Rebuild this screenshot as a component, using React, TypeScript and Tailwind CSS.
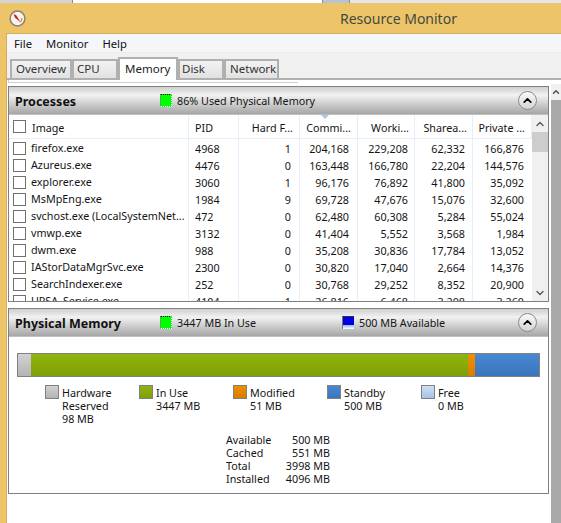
import type { ReactNode } from 'react';
import { ChevronUp, ChevronDown } from 'lucide-react';

const headers = [
  { label: 'Image', cls: 'w-[180px] pl-[23px]' },
  { label: 'PID', cls: 'w-[50px] pl-[6px]' },
  { label: 'Hard F...', cls: 'w-[61px] pr-[6px] text-right' },
  { label: 'Commi...', cls: 'w-[58px] pr-[6px] text-right' },
  { label: 'Worki...', cls: 'w-[57px] pr-[5px] text-right' },
  { label: 'Sharea...', cls: 'w-[58px] pr-[5px] text-right' },
  { label: 'Private ...', cls: 'w-[59px] pr-[6px] text-right' },
];

const processes = [
  ['firefox.exe', '4968', '1', '204,168', '229,208', '62,332', '166,876'],
  ['Azureus.exe', '4476', '0', '163,448', '166,780', '22,204', '144,576'],
  ['explorer.exe', '3060', '1', '96,176', '76,892', '41,800', '35,092'],
  ['MsMpEng.exe', '1984', '9', '69,728', '47,676', '15,076', '32,600'],
  ['svchost.exe (LocalSystemNet...', '472', '0', '62,480', '60,308', '5,284', '55,024'],
  ['vmwp.exe', '3132', '0', '41,404', '5,552', '3,568', '1,984'],
  ['dwm.exe', '988', '0', '35,208', '30,836', '17,784', '13,052'],
  ['IAStorDataMgrSvc.exe', '2300', '0', '30,820', '17,040', '2,664', '14,376'],
  ['SearchIndexer.exe', '252', '0', '30,768', '29,252', '8,352', '20,900'],
  ['UPSA_Service.exe', '4104', '1', '26,816', '6,468', '3,208', '3,260'],
];

const legend = [
  { name: 'Hardware', lines: ['Reserved', '98 MB'], fill: 'from-[#d2d2d2] to-[#b4b4b4]' },
  { name: 'In Use', lines: ['3447 MB'], fill: 'from-[#8fb50c] to-[#7f9f08]' },
  { name: 'Modified', lines: ['51 MB'], fill: 'from-[#f09000] to-[#d87c00]' },
  { name: 'Standby', lines: ['500 MB'], fill: 'from-[#4a88d4] to-[#3a74bc]' },
  { name: 'Free', lines: ['0 MB'], fill: 'from-[#cfdff5] to-[#a4c2ea]' },
];

const totals = [
  ['Available', '500 MB'],
  ['Cached', '551 MB'],
  ['Total', '3998 MB'],
  ['Installed', '4096 MB'],
];

const tabs = [
  { label: 'Overview', cls: 'w-[62px] pl-[4px]' },
  { label: 'CPU', cls: 'w-[46px] pl-[3px]' },
  { label: 'Memory', cls: 'w-[60px] pl-[5px]', active: true },
  { label: 'Disk', cls: 'w-[46px] pl-[2px]' },
  { label: 'Network', cls: 'w-[55px] pl-[4px]' },
];

function Check() {
  return <span className="block w-[13px] h-[13px] shrink-0 border border-[#707070] bg-white" />;
}

function GreenSwatch() {
  return (
    <span className="block w-[12px] h-[13px] shrink-0 border-t border-dotted border-t-black border-l border-l-[#777] border-r border-r-white border-b border-b-white bg-[#00ff00]" />
  );
}

function BlueSwatch() {
  return (
    <span className="flex flex-col w-[12px] h-[13px] shrink-0 border-l border-l-[#777] border-t border-t-[#333]">
      <span className="block h-[8px] bg-[#0000e6]" />
      <span className="block flex-1 bg-gradient-to-b from-[#8db8ee] to-white" />
    </span>
  );
}

function SectionHeader({ title, width, children }: { title: string; width: string; children: ReactNode }) {
  return (
    <div className="flex items-center h-[28px] shrink-0 border-b border-[#c0c0c0] bg-gradient-to-b from-[#cfcfcf] via-[#f2f2f2] via-30% to-[#a6a6a6]">
      <span className={`${width} shrink-0 pl-[6px] pt-[2px] text-[12.5px] font-bold text-[#111] whitespace-nowrap`}>{title}</span>
      {children}
      <span className="ml-auto mr-[11px] flex items-center justify-center w-[19px] h-[19px] rounded-full border border-[#8a8a8a] bg-gradient-to-b from-[#fafafa] to-[#d4d4d4]">
        <ChevronUp className="w-[13px] h-[13px] text-black" strokeWidth={3.2} />
      </span>
    </div>
  );
}

export default function App() {
  return (
    <div className="font-['Noto_Sans',sans-serif] w-[561px] h-[523px] overflow-hidden bg-white text-[10.75px] leading-[13px] text-[#141414] flex flex-col">
      {/* strip of the window behind */}
      <div className="h-[3px] shrink-0 flex bg-[#e6e6e6]">
        <div className="w-[73px] bg-[#d4d4d4] border-r border-[#888]" />
        <div className="w-[249px] bg-white" />
        <div className="w-[28px] bg-[#b9c4d2] border-x border-[#8a8a8a]" />
      </div>

      {/* title bar */}
      <div className="h-[30px] shrink-0 flex items-center bg-[#eec468] pl-[9px] pt-[1px]">
        <svg width="17" height="17" viewBox="0 0 17 17" className="shrink-0">
          <circle cx="8.5" cy="8.5" r="7.4" fill="#f6f2ec" stroke="#8c8070" strokeWidth="1.5" />
          <path d="M12.8 8 A4.5 4.5 0 0 1 11.5 12" fill="none" stroke="#e08030" strokeWidth="1.2" />
          <path d="M4.6 4 L7.2 5.2 L11.6 12.6 L6 7.6 Z" fill="#c41a18" />
        </svg>
        <span className="ml-[314px] text-[14px] text-[#3f4a44] whitespace-nowrap">Resource Monitor</span>
      </div>

      <div className="flex-1 flex min-h-0">
        <div className="w-[7px] shrink-0 bg-[#eec468] border-r border-[#d3ae5e]" />
        <div className="flex-1 min-w-0 flex flex-col border-t border-[#d3ae5e]">
          {/* menu */}
          <div className="h-[19px] shrink-0 flex items-center gap-[14px] pl-[7px] bg-[#f5f6f9] border-b border-[#ebebeb] text-[11.25px] text-[#111]">
            <span>File</span>
            <span>Monitor</span>
            <span>Help</span>
          </div>

          {/* tabs */}
          <div className="h-[27px] shrink-0 flex items-end pl-[3px] bg-[#f0f0f0] border-b-2 border-[#b0b0b0] text-[11.5px]">
            {tabs.map((t) =>
              t.active ? (
                <div key={t.label} className={`${t.cls} relative z-10 h-[23px] -mb-[2px] shrink-0 border-2 border-b-0 border-[#b0b0b0] bg-white pt-[3px] text-[#222]`}>
                  {t.label}
                </div>
              ) : (
                <div key={t.label} className={`${t.cls} h-[19px] shrink-0 border-2 border-b-0 border-[#b0b0b0] bg-gradient-to-b from-[#f2f2f2] to-[#e2e2e2] pt-[1px] text-[#333]`}>
                  {t.label}
                </div>
              )
            )}
          </div>

          <div className="flex-1 flex min-h-0">
            <div className="w-[544px] shrink-0 pl-[1px] flex flex-col">
              <div className="h-[3px] w-[290px] shrink-0 border-l border-b border-[#cfcfcf]" />
              <div className="h-[3px] shrink-0" />

              {/* processes */}
              <section className="w-[541px] h-[216px] shrink-0 overflow-hidden border border-[#808080] flex flex-col">
                <SectionHeader title="Processes" width="w-[151px]">
                  <GreenSwatch />
                  <span className="ml-[5px] pt-[1px]">86% Used Physical Memory</span>
                </SectionHeader>
                <div className="flex flex-1 min-h-0">
                  <div className="w-[523px] shrink-0">
                    <div className="relative flex h-[24px] items-center border-b border-[#e6eefa]">
                      <span className="absolute left-[312px] top-0 w-0 h-0 border-x-[4px] border-x-transparent border-t-[4px] border-t-[#a8c8ea]" />
                      <span className="absolute left-[4px] top-[5px]"><Check /></span>
                      {headers.map((h) => (
                        <div key={h.label} className={`${h.cls} h-full leading-[26px] shrink-0 border-r border-[#e6eefa] whitespace-nowrap`}>
                          {h.label}
                        </div>
                      ))}
                    </div>
                    {processes.map((p) => (
                      <div key={p[0]} className="flex h-[17px] items-center leading-[20px]">
                        <div className="w-[180px] h-full shrink-0 flex items-center pl-[4px] pt-[1px] gap-[5px] border-r border-[#e6eefa] whitespace-nowrap">
                          <Check />
                          <span>{p[0]}</span>
                        </div>
                        <div className="w-[50px] h-full shrink-0 pl-[6px] border-r border-[#e6eefa]">{p[1]}</div>
                        <div className="w-[61px] h-full shrink-0 pr-[8px] text-right border-r border-[#e6eefa]">{p[2]}</div>
                        <div className="w-[58px] h-full shrink-0 pr-[8px] text-right border-r border-[#e6eefa]">{p[3]}</div>
                        <div className="w-[57px] h-full shrink-0 pr-[6px] text-right border-r border-[#e6eefa]">{p[4]}</div>
                        <div className="w-[58px] h-full shrink-0 pr-[7px] text-right border-r border-[#e6eefa]">{p[5]}</div>
                        <div className="w-[59px] h-full shrink-0 pr-[8px] text-right">{p[6]}</div>
                      </div>
                    ))}
                  </div>
                  <div className="flex-1 flex flex-col bg-[#f0f0f0]">
                    <div className="h-[17px] flex items-center justify-center">
                      <ChevronUp className="w-[12px] h-[12px] text-[#606060]" strokeWidth={3} />
                    </div>
                    <div className="h-[20px] bg-[#cdcdcd]" />
                    <div className="flex-1" />
                    <div className="h-[17px] flex items-center justify-center">
                      <ChevronDown className="w-[12px] h-[12px] text-[#606060]" strokeWidth={3} />
                    </div>
                  </div>
                </div>
              </section>

              <div className="h-[6px] shrink-0" />

              {/* physical memory */}
              <section className="w-[541px] h-[186px] shrink-0 border border-[#808080] flex flex-col">
                <SectionHeader title="Physical Memory" width="w-[151px]">
                  <GreenSwatch />
                  <span className="ml-[5px] pt-[1px] w-[165px] shrink-0">3447 MB In Use</span>
                  <BlueSwatch />
                  <span className="ml-[5px] pt-[1px]">500 MB Available</span>
                </SectionHeader>

                <div className="pl-[8px] pt-[16px]">
                  <div className="flex w-[523px] h-[24px] border border-[#808080]">
                    <div className="w-[13px] bg-gradient-to-b from-[#d2d2d2] to-[#b4b4b4]" />
                    <div className="w-[437px] bg-gradient-to-b from-[#8fb50c] to-[#7f9f08]" />
                    <div className="w-[7px] bg-gradient-to-b from-[#f09000] to-[#d87c00]" />
                    <div className="flex-1 bg-gradient-to-b from-[#4a88d4] to-[#3a74bc]" />
                  </div>

                  <div className="flex pl-[28px] mt-[8px]">
                    {legend.map((l) => (
                      <div key={l.name} className="w-[94px] shrink-0 flex gap-[3px]">
                        <span className={`block w-[14px] h-[14px] shrink-0 border border-[#808080] bg-gradient-to-b ${l.fill}`} />
                        <div className="pt-[1px] leading-[13px] whitespace-nowrap translate-y-[1px]">
                          <div>{l.name}</div>
                          {l.lines.map((line) => (
                            <div key={line}>{line}</div>
                          ))}
                        </div>
                      </div>
                    ))}
                  </div>

                  <div className="grid grid-cols-[58px_46px] ml-[209px] mt-[9px] whitespace-nowrap">
                    {totals.map(([name, value]) => (
                      <div key={name} className="contents">
                        <span>{name}</span>
                        <span className="text-right">{value}</span>
                      </div>
                    ))}
                  </div>
                </div>
              </section>
            </div>

            {/* outer scrollbar */}
            <div className="flex-1 flex flex-col pt-[4px]">
              <div className="h-[16px] flex items-center justify-center bg-[#f0f0f0]">
                <ChevronUp className="w-[10px] h-[10px] text-[#505050]" strokeWidth={3.5} />
              </div>
              <div className="flex-1 bg-[#a9a9a9]" />
            </div>
          </div>
        </div>
      </div>
    </div>
  );
}
